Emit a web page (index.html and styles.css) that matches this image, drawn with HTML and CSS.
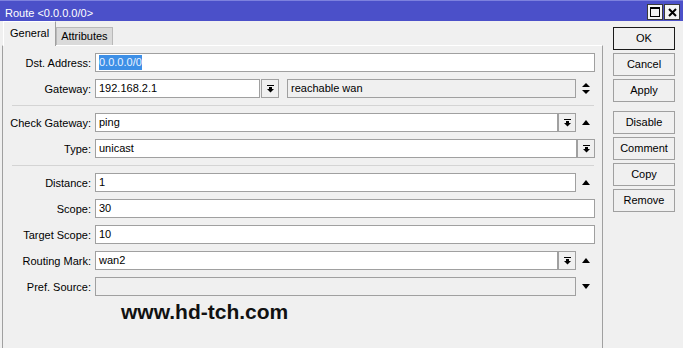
FILE: index.html
```html
<!DOCTYPE html>
<html lang="en">
<head>
    <meta charset="UTF-8">
    <title>Route &lt;0.0.0.0/0&gt;</title>
    <link rel="stylesheet" href="styles.css">
</head>
<body>
    <div class="titlebar">
        <span class="title">Route &lt;0.0.0.0/0&gt;</span>
        <div class="wincontrols">
            <span class="wbtn">
                <svg width="10" height="10" viewBox="0 0 10 10"><path d="M0 0h10v10H0z M1 2v7h8V2z" fill="#000" fill-rule="evenodd"/></svg>
            </span>
            <span class="wbtn">
                <svg width="9" height="9" viewBox="0 0 9 9"><path d="M1 1 8 8M8 1 1 8" stroke="#000" stroke-width="2"/></svg>
            </span>
        </div>
    </div>

    <div class="content">
        <div class="main">
            <div class="tabs">
                <div class="tab active">General</div>
                <div class="tab">Attributes</div>
            </div>
            <div class="panel">
                <div class="row">
                    <label>Dst. Address:</label>
                    <div class="field">
                        <div class="input"><span class="sel">0.0.0.0/0</span></div>
                    </div>
                </div>
                <div class="row">
                    <label>Gateway:</label>
                    <div class="field">
                        <div class="input gw">192.168.2.1</div>
                        <span class="drop gap"><svg width="7" height="8" viewBox="0 0 7 8"><rect width="7" height="1"/><rect x="2" y="2" width="3" height="2"/><path d="M0 4h7L3.5 7.5z"/></svg></span>
                        <div class="input off wide">reachable wan</div>
                        <span class="slot"><svg width="8" height="11" viewBox="0 0 8 11"><path d="M4 0 8 4H0z M0 7h8l-4 4z"/></svg></span>
                    </div>
                </div>

                <div class="sep"></div>

                <div class="row">
                    <label>Check Gateway:</label>
                    <div class="field">
                        <div class="input">ping</div>
                        <span class="drop"><svg width="7" height="8" viewBox="0 0 7 8"><rect width="7" height="1"/><rect x="2" y="2" width="3" height="2"/><path d="M0 4h7L3.5 7.5z"/></svg></span>
                        <span class="slot"><svg width="8" height="5" viewBox="0 0 8 5"><path d="M4 0 8 5H0z"/></svg></span>
                    </div>
                </div>
                <div class="row">
                    <label>Type:</label>
                    <div class="field">
                        <div class="input">unicast</div>
                        <span class="drop"><svg width="7" height="8" viewBox="0 0 7 8"><rect width="7" height="1"/><rect x="2" y="2" width="3" height="2"/><path d="M0 4h7L3.5 7.5z"/></svg></span>
                    </div>
                </div>

                <div class="sep"></div>

                <div class="row">
                    <label>Distance:</label>
                    <div class="field">
                        <div class="input">1</div>
                        <span class="slot"><svg width="8" height="5" viewBox="0 0 8 5"><path d="M4 0 8 5H0z"/></svg></span>
                    </div>
                </div>
                <div class="row">
                    <label>Scope:</label>
                    <div class="field">
                        <div class="input">30</div>
                    </div>
                </div>
                <div class="row">
                    <label>Target Scope:</label>
                    <div class="field">
                        <div class="input">10</div>
                    </div>
                </div>
                <div class="row">
                    <label>Routing Mark:</label>
                    <div class="field">
                        <div class="input">wan2</div>
                        <span class="drop"><svg width="7" height="8" viewBox="0 0 7 8"><rect width="7" height="1"/><rect x="2" y="2" width="3" height="2"/><path d="M0 4h7L3.5 7.5z"/></svg></span>
                        <span class="slot"><svg width="8" height="5" viewBox="0 0 8 5"><path d="M4 0 8 5H0z"/></svg></span>
                    </div>
                </div>
                <div class="row">
                    <label>Pref. Source:</label>
                    <div class="field">
                        <div class="input off"></div>
                        <span class="slot"><svg width="8" height="5" viewBox="0 0 8 5"><path d="M0 0h8L4 5z"/></svg></span>
                    </div>
                </div>

                <div class="mark">www.hd-tch.com</div>
            </div>
        </div>

        <div class="actions">
            <div class="btn default">OK</div>
            <div class="btn">Cancel</div>
            <div class="btn">Apply</div>
            <div class="btn group">Disable</div>
            <div class="btn">Comment</div>
            <div class="btn">Copy</div>
            <div class="btn">Remove</div>
        </div>
    </div>
</body>
</html>
```

FILE: styles.css
```css
body {
    margin: 0;
    width: 683px;
    height: 348px;
    overflow: hidden;
    background: #f0f0f0;
    font-family: "Liberation Sans", Arial, sans-serif;
    font-size: 11px;
    color: #000;
}

/* title bar */
.titlebar {
    height: 21px;
    background: #4b50c9;
    box-shadow: inset 0 1px #7d81de;
    display: flex;
    justify-content: space-between;
}

.title {
    color: #fff;
    padding: 7px 0 0 5px;
    line-height: 13px;
}

.wincontrols {
    display: flex;
    gap: 1px;
    padding: 4px 3px 0 0;
}

.wbtn {
    width: 16px;
    height: 16px;
    box-sizing: border-box;
    border: 1px solid #3a3a3a;
    background: #f4f4f4;
    display: flex;
    align-items: center;
    justify-content: center;
}

/* body */
.content {
    display: flex;
}

.main {
    margin-left: 2px;
    width: 601px;
}

.tabs {
    display: flex;
    align-items: flex-end;
    height: 24px;
    padding-left: 1px;
}

.tab {
    height: 18px;
    line-height: 17px;
    padding: 0 4px;
    background: #dadada;
    border: 1px solid #b9b9b9;
    border-bottom: none;
    box-sizing: border-box;
}

.tab.active {
    height: 25px;
    margin-bottom: -1px;
    padding: 0 6px;
    line-height: 22px;
    background: #f0f0f0;
    border-color: #fff #a0a0a0 #f0f0f0 #fff;
    position: relative;
    z-index: 1;
}

.panel {
    height: 295px;
    padding-top: 7px;
    border-top: 1px solid #fff;
    border-left: 1px solid #a0a0a0;
    border-right: 1px solid #a0a0a0;
}

.row {
    display: flex;
    align-items: center;
    height: 19px;
    margin-bottom: 7px;
}

.row label {
    width: 88px;
    margin-right: 4px;
    text-align: right;
}

.field {
    display: flex;
    width: 500px;
    height: 19px;
}

.input {
    flex: 1;
    height: 19px;
    box-sizing: border-box;
    border: 1px solid #a0a0a0;
    background: #fff;
    padding: 0 3px;
    line-height: 17px;
    white-space: nowrap;
}

.input.off {
    background: #f0f0f0;
}

.input.gw {
    flex: none;
    width: 165px;
}

.sel {
    display: inline-block;
    background: #3d8fe6;
    color: #eaf2ff;
    line-height: 15px;
}

.drop {
    width: 18px;
    height: 19px;
    box-sizing: border-box;
    border: 1px solid #a0a0a0;
    background: #f0f0f0;
    display: flex;
    align-items: center;
    justify-content: center;
}

.drop.gap {
    margin: 0 8px 0 1px;
}

.slot {
    width: 19px;
    flex: none;
    display: flex;
    align-items: center;
    justify-content: center;
}

.sep {
    margin: 1px 0 7px 9px;
    width: 582px;
    border-top: 1px solid #d4d4d4;
}

.mark {
    margin: -3px 0 0 118px;
    font-size: 21px;
    font-weight: bold;
    line-height: 24px;
    color: #111;
}

/* right column buttons */
.actions {
    margin-left: 10px;
    padding-top: 6px;
    width: 62px;
    display: flex;
    flex-direction: column;
    gap: 3px;
}

.btn {
    height: 23px;
    box-sizing: border-box;
    border: 1px solid #a0a0a0;
    background: #f0f0f0;
    text-align: center;
    line-height: 21px;
}

.btn.default {
    border-color: #1a1a1a;
}

.btn.group {
    margin-top: 6px;
}
```
